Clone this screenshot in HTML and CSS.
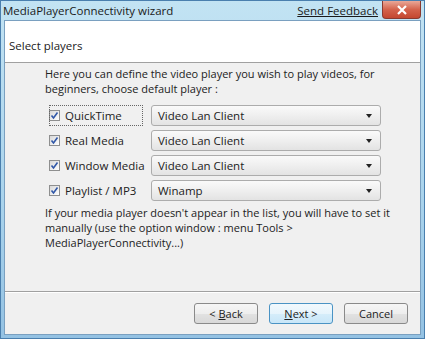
FILE: index.html
```html
<!DOCTYPE html>
<html lang="en">

<head>
    <meta charset="UTF-8">
    <title>MediaPlayerConnectivity wizard</title>
    <link rel="stylesheet" href="styles.css">
</head>

<body>
    <div class="window">
        <div class="titlebar">
            <span class="title">MediaPlayerConnectivity wizard</span>
            <a class="feedback" href="#">Send Feedback</a>
            <div class="close">
                <svg width="12" height="10" viewBox="0 0 12 10">
                    <path d="M2 1 L10 9 M10 1 L2 9" stroke="#fff" stroke-width="2.2" />
                </svg>
            </div>
        </div>

        <div class="client">
            <div class="header">Select players</div>

            <div class="body">
                <p class="intro">Here you can define the video player you wish to play videos, for beginners, choose default player :</p>

                <div class="players">
                    <label class="check focus"><span class="box"><svg width="9" height="9" viewBox="0 0 9 9"><path d="M1.5 4.5 L3.5 7 L7.5 1.5" fill="none" stroke="#3158a8" stroke-width="1.6" /></svg></span>QuickTime</label>
                    <div class="combo">Video Lan Client<span class="arrow"></span></div>

                    <label class="check"><span class="box"><svg width="9" height="9" viewBox="0 0 9 9"><path d="M1.5 4.5 L3.5 7 L7.5 1.5" fill="none" stroke="#3158a8" stroke-width="1.6" /></svg></span>Real Media</label>
                    <div class="combo">Video Lan Client<span class="arrow"></span></div>

                    <label class="check"><span class="box"><svg width="9" height="9" viewBox="0 0 9 9"><path d="M1.5 4.5 L3.5 7 L7.5 1.5" fill="none" stroke="#3158a8" stroke-width="1.6" /></svg></span>Window Media</label>
                    <div class="combo">Video Lan Client<span class="arrow"></span></div>

                    <label class="check"><span class="box"><svg width="9" height="9" viewBox="0 0 9 9"><path d="M1.5 4.5 L3.5 7 L7.5 1.5" fill="none" stroke="#3158a8" stroke-width="1.6" /></svg></span>Playlist / MP3</label>
                    <div class="combo">Winamp<span class="arrow"></span></div>
                </div>

                <p class="note">If your media player doesn't appear in the list, you will have to set it manually (use the option window : menu Tools &gt; MediaPlayerConnectivity...)</p>
            </div>

            <div class="footer">
                <button class="btn">&lt; <u>B</u>ack</button>
                <button class="btn default"><u>N</u>ext &gt;</button>
                <button class="btn">Cancel</button>
            </div>
        </div>
    </div>
</body>

</html>
```

FILE: styles.css
```css
body {
    margin: 0;
    font-family: "Open Sans", "Noto Sans", sans-serif;
    font-size: 11px;
    color: #222;
}

.window {
    width: 425px;
    height: 339px;
    box-sizing: border-box;
    display: flex;
    flex-direction: column;
    background: linear-gradient(to bottom, #c2e3f3, #a9d3ec 60%, #94c2e3);
    border: 1px solid #4a7fae;
}

.titlebar {
    height: 19px;
    display: flex;
    align-items: center;
    padding-left: 2px;
}

.title {
    flex: 1;
    font-size: 11.5px;
    color: #1a1a1a;
}

.feedback {
    color: #1a1a1a;
    text-decoration: underline;
    margin-right: 4px;
    font-size: 11.5px;
}

.close {
    width: 39px;
    height: 18px;
    align-self: flex-start;
    margin-right: 3px;
    border: 1px solid #8a3a30;
    border-top: none;
    border-radius: 0 0 4px 4px;
    box-sizing: border-box;
    background: linear-gradient(to bottom, #e9a898, #d4634c 50%, #c4472f);
    display: flex;
    align-items: center;
    justify-content: center;
}

.client {
    flex: 1;
    margin: 0 3px 3px 3px;
    border: 1px solid #7aa0c0;
    background: #f0f0f0;
    display: flex;
    flex-direction: column;
}

.header {
    height: 42px;
    background: #fff;
    border-bottom: 1px solid #a0a0a0;
    padding: 17px 0 0 4px;
    box-sizing: border-box;
    font-size: 11.5px;
}

.body {
    flex: 1;
    padding: 3px 10px 0 40px;
    border-bottom: 1px solid #a0a0a0;
}

.intro,
.note {
    margin: 0;
    line-height: 15px;
}

.players {
    display: grid;
    grid-template-columns: 102px 230px;
    grid-auto-rows: 21px;
    row-gap: 4px;
    margin: 9px 0 4px 4px;
}

.check {
    display: flex;
    align-items: center;
    gap: 5px;
    font-size: 11.5px;
}

.check.focus {
    outline: 1px dotted #666;
    outline-offset: -1px;
    margin-right: 8px;
}

.box {
    width: 11px;
    height: 11px;
    box-sizing: border-box;
    border: 1px solid #8e8f8f;
    background: linear-gradient(to bottom right, #d8d8d8, #fff);
    display: flex;
    align-items: center;
    justify-content: center;
}

.combo {
    border: 1px solid #acacac;
    border-radius: 3px;
    background: linear-gradient(to bottom, #fafafa, #efefef 50%, #e3e3e3);
    display: flex;
    align-items: center;
    justify-content: space-between;
    padding: 0 8px 0 6px;
    font-size: 11.5px;
}

.arrow {
    width: 0;
    height: 0;
    border-left: 3px solid transparent;
    border-right: 3px solid transparent;
    border-top: 4px solid #222;
}

.footer {
    height: 41px;
    border-top: 1px solid #fff;
    display: flex;
    align-items: center;
    justify-content: flex-end;
    gap: 11px;
    padding-right: 12px;
}

.btn {
    width: 64px;
    height: 21px;
    font-family: inherit;
    font-size: 11px;
    color: #222;
    border: 1px solid #8a8a8a;
    border-radius: 3px;
    background: linear-gradient(to bottom, #f6f6f6, #eeeeee 50%, #e2e2e2 51%, #d8d8d8);
    padding: 0;
}

.btn.default {
    border-color: #4a93c4;
    background: linear-gradient(to bottom, #f2f9fd, #e6f4fc 50%, #d6edfa 51%, #c8e6f8);
}
```
